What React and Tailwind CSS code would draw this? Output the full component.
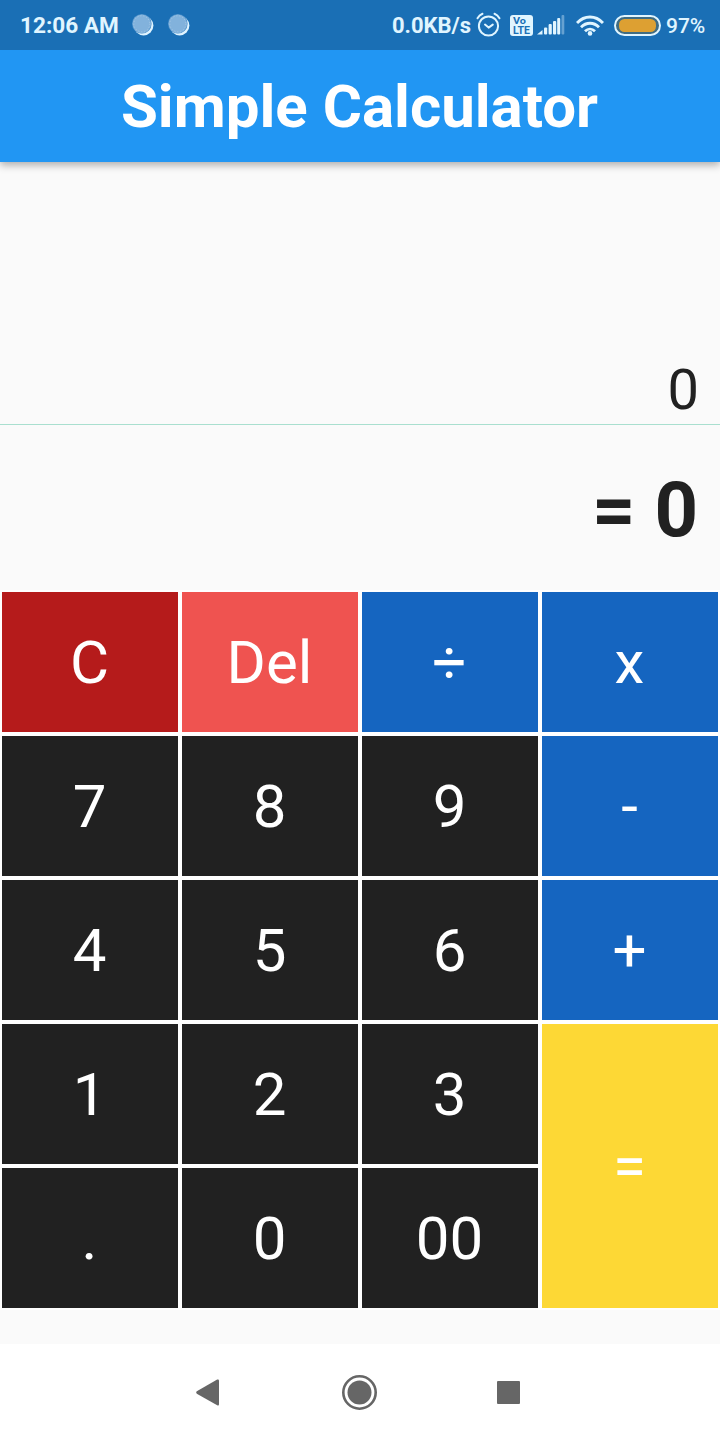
import React from "react";

const RED = "bg-[#b51b1b]";
const CORAL = "bg-[#ef5350]";
const BLUE = "bg-[#1565c0]";
const DARK = "bg-[#212121]";
const YELLOW = "bg-[#fdd835]";

const keys = [
  ["C", RED], ["Del", CORAL], ["÷", BLUE], ["x", BLUE],
  ["7", DARK], ["8", DARK], ["9", DARK], ["-", BLUE],
  ["4", DARK], ["5", DARK], ["6", DARK], ["+", BLUE],
  ["1", DARK], ["2", DARK], ["3", DARK], ["=", YELLOW],
  [".", DARK], ["0", DARK], ["00", DARK],
];

function Moon({ className }) {
  return (
    <svg className={className} width="22" height="22" viewBox="0 0 22 22">
      <circle cx="11.6" cy="11.6" r="9.8" fill="#e0f4ff" />
      <circle cx="9.8" cy="9.8" r="9.8" fill="#4a8ec8" />
      <circle cx="9.8" cy="9.8" r="9.3" fill="#82b2dc" />
      <circle cx="9.8" cy="9.8" r="8" fill="none" stroke="#a9cbe7" strokeWidth="1" strokeDasharray="1 2" />
    </svg>
  );
}

function Alarm() {
  return (
    <svg className="ml-[5px] shrink-0" width="25" height="26" viewBox="0 0 25 26" fill="none" stroke="#e0f5ff" strokeWidth="2" strokeLinecap="round" strokeLinejoin="round">
      <circle cx="12.5" cy="14" r="9.6" />
      <path d="M1.5 6.3C2.7 4.2 4.3 2.7 6.5 1.8M23.5 6.3C22.3 4.2 20.7 2.7 18.5 1.8" />
      <path d="M9 12.6l3.6 3 4.2-3" />
    </svg>
  );
}

function Volte() {
  return (
    <svg className="ml-[9px] shrink-0" width="23" height="21" viewBox="0 0 23 21">
      <rect width="23" height="21" rx="3" fill="#e0f5ff" />
      <g fill="#1a6fb5" className="font-['Roboto',sans-serif] font-bold">
        <text x="3" y="9.4" fontSize="9.5" textLength="13" lengthAdjust="spacingAndGlyphs">Vo</text>
        <text x="3" y="18.6" fontSize="10" textLength="17" lengthAdjust="spacingAndGlyphs">LTE</text>
      </g>
    </svg>
  );
}

function Signal() {
  return (
    <svg className="ml-[4px] shrink-0" width="28" height="20" viewBox="0 0 28 20" fill="#e0f5ff">
      <path d="M0 19.5L5.5 15V19.5Z" />
      <rect x="7" y="12.5" width="3.2" height="7" rx="1" />
      <rect x="11.6" y="9" width="3.2" height="10.5" rx="1" />
      <rect x="16" y="6" width="3.2" height="13.5" rx="1" />
      <rect x="20.2" y="3" width="3" height="16.5" rx="1" />
      <rect x="24.5" y="0" width="2.8" height="19.5" rx="1" opacity=".38" />
    </svg>
  );
}

function Wifi() {
  return (
    <svg className="ml-[11px] shrink-0" width="28" height="21" viewBox="0 0 28 21" fill="none" stroke="#e0f5ff" strokeWidth="2.8">
      <path d="M1 8C8.5 0 19.5 0 27 8" />
      <path d="M5 12.2C10.2 6.9 17.8 6.9 23 12.2" />
      <path d="M9 16.3C12 13.3 16 13.3 19 16.3" />
      <circle cx="14" cy="18.4" r="2.3" fill="#e0f5ff" stroke="none" />
    </svg>
  );
}

function Battery() {
  return (
    <svg className="ml-[10px] shrink-0" width="47" height="21" viewBox="0 0 47 21">
      <rect x="1" y="1" width="45" height="19" rx="9.5" fill="#3f6c83" stroke="#e0f5ff" strokeWidth="2" />
      <rect x="5" y="4" width="37" height="13" rx="5.5" fill="#dda032" />
    </svg>
  );
}

export default function App() {
  return (
    <div className="flex h-[1440px] w-[720px] flex-col overflow-hidden bg-[#fafafa] font-['Roboto',sans-serif]">
      <div className="relative z-20 flex h-[50px] shrink-0 items-center bg-[#1a6fb5] pl-[20px] pr-[15px] text-[#e0f5ff]">
        <span className="w-[99px] shrink-0 whitespace-nowrap pt-[2px] text-[22.6px] font-bold leading-none">12:06 AM</span>
        <Moon className="ml-[13px] shrink-0" />
        <Moon className="ml-[14px] shrink-0" />
        <span className="ml-auto whitespace-nowrap pt-[2px] text-[22px] font-bold leading-none">0.0KB/s</span>
        <Alarm />
        <Volte />
        <Signal />
        <Wifi />
        <Battery />
        <span className="ml-[5px] w-[39px] whitespace-nowrap pt-[2px] text-[21px] font-medium leading-none">97%</span>
      </div>

      <header className="z-10 flex h-[112px] shrink-0 items-center justify-center bg-[#2196f3] pr-px pt-[2px] shadow-[0_3px_8px_rgba(0,0,0,0.32)]">
        <h1 className="text-[60px] font-bold leading-[70px] text-white">Simple Calculator</h1>
      </header>

      <div className="flex h-[263px] shrink-0 items-end justify-end border-b border-[#a9dfcf] pb-px pr-[21px] text-[56px] leading-[66px] text-[#212121]">
        0
      </div>
      <div className="h-[165px] shrink-0 pr-[22px] pt-[40px] text-right text-[76px] font-bold leading-[90px] text-[#212121]">
        = 0
      </div>

      <div className="grid h-[720px] shrink-0 grid-cols-4 grid-rows-5 gap-1 bg-white p-[2px]">
        {keys.map(([label, color]) => (
          <button
            key={label}
            className={`${color} ${label === "=" ? "row-span-2" : ""} flex items-center justify-center pr-px pt-[2px] text-[60px] leading-[70px] text-white`}
          >
            {label}
          </button>
        ))}
      </div>

      <nav className="mt-auto flex h-[96px] shrink-0 items-center bg-white pl-[196px] text-[#666666]">
        <svg width="23" height="27" viewBox="0 0 23 27" fill="currentColor">
          <path d="M.8 12.3L21.2.6Q23 0 23 1.8V25.2Q23 27 21.2 26.2L.8 14.7Q-.4 13.5.8 12.3Z" />
        </svg>
        <svg className="ml-[123px]" width="35" height="35" viewBox="0 0 35 35">
          <circle cx="17.5" cy="17.5" r="16.2" fill="none" stroke="currentColor" strokeWidth="2.6" />
          <circle cx="17.5" cy="17.5" r="12" fill="currentColor" />
        </svg>
        <svg className="ml-[120px]" width="23" height="23" viewBox="0 0 23 23">
          <rect width="23" height="23" rx="1" fill="currentColor" />
        </svg>
      </nav>
    </div>
  );
}
